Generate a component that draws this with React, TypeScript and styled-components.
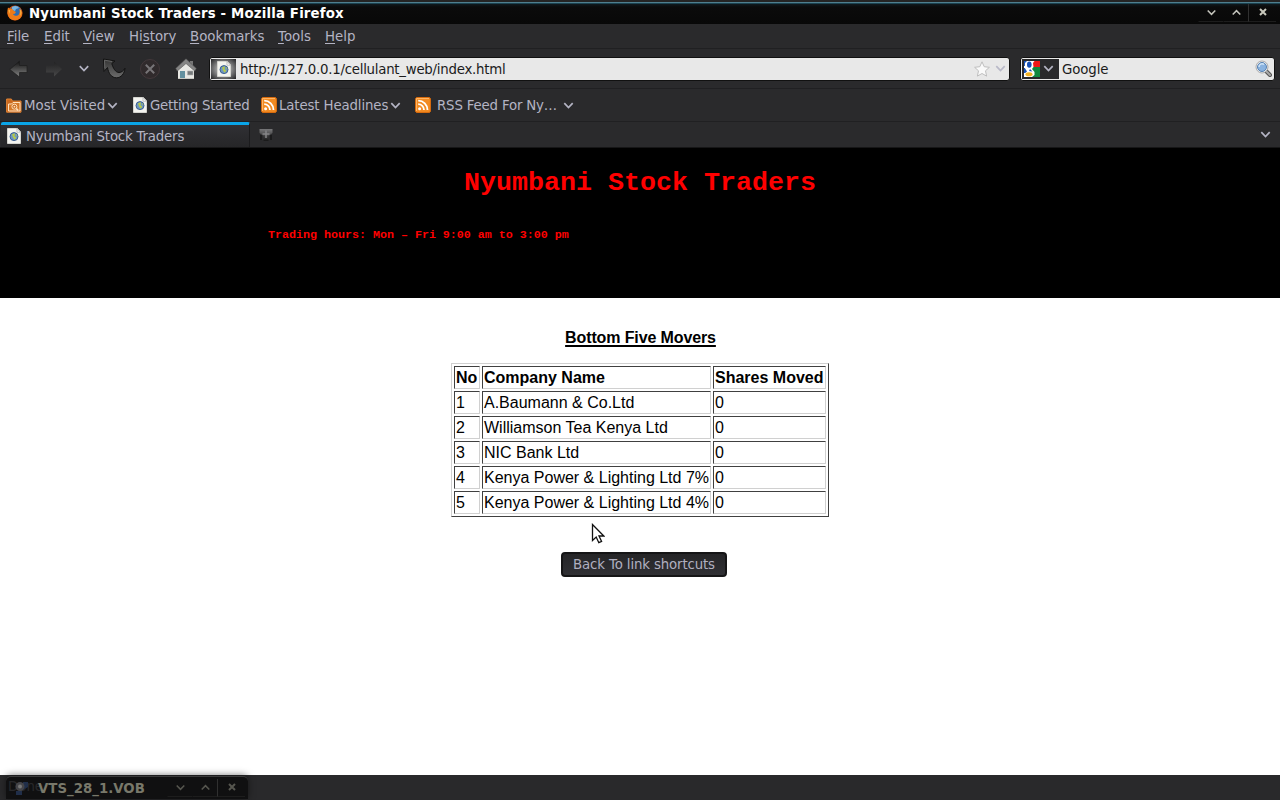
import React from 'react';
import styled, { createGlobalStyle } from 'styled-components';

const GlobalStyle = createGlobalStyle`
  * { box-sizing: border-box; }
  body { margin: 0; background: #fff; overflow: hidden; }
`;

const Window = styled.div`
  width: 1280px;
  height: 800px;
  display: flex;
  flex-direction: column;
  overflow: hidden;
  font: 13.33px/16px 'DejaVu Sans', sans-serif;
  color: #b4b4c4;
  background: #2a2a2c;
  white-space: nowrap;
`;

const Label = styled.span<{ $spacing?: number }>`
  padding-top: 2px;
  letter-spacing: ${(p) => p.$spacing ?? 0}px;
`;

const TitleBar = styled.header`
  height: 24px;
  flex: none;
  display: flex;
  align-items: center;
  padding: 2px 0 0 7px;
  color: #fff;
  font-weight: bold;
  background: linear-gradient(#242424 0 2px, #4f7f8f 2px 3px, #1b424f 3px 4px, #10191d 4px, #0b0b0b 7px, #080808 24px);
`;

const TitleText = styled.span`
  margin-left: 6px;
  padding-top: 1px;
  flex: 1;
  letter-spacing: 0.16px;
`;

const WindowControls = styled.span<{ $right: number }>`
  display: flex;
  margin-right: ${(p) => p.$right}px;
`;

const WindowButton = styled.span<{ $boxed?: boolean; $w?: number }>`
  width: ${(p) => p.$w ?? 25}px;
  height: 18px;
  margin-bottom: 1px;
  display: flex;
  align-items: center;
  justify-content: center;
  border-left: 1px solid ${(p) => (p.$boxed ? '#303030' : 'transparent')};
  border-bottom: 1px solid #1d1d1d;
`;

const Bar = styled.div<{ $h: number }>`
  height: ${(p) => p.$h}px;
  flex: none;
  display: flex;
  align-items: center;
  border-bottom: 1px solid #202022;
`;

const MenuBar = styled(Bar)`
  padding: 1px 0 0 7px;
`;

const MenuItem = styled.span<{ $w: number }>`
  width: ${(p) => p.$w}px;
  u { text-underline-offset: 2px; text-decoration-thickness: 1px; text-decoration-skip-ink: none; }
`;

const NavBar = styled(Bar)`
  padding-left: 9px;
`;

const NavSlot = styled.span<{ $w: number }>`
  width: ${(p) => p.$w}px;
  display: flex;
  justify-content: center;
`;

const Field = styled.div<{ $w: number }>`
  width: ${(p) => p.$w}px;
  height: 24px;
  display: flex;
  align-items: center;
  background: #e8e8e8;
  border: 1px solid #111;
  border-radius: 3px;
  color: #1b1b1b;
`;

const SiteBadge = styled.span`
  width: 25px;
  height: 20px;
  margin: 0 1px;
  display: flex;
  align-items: center;
  justify-content: center;
  background: radial-gradient(#aaa 30%, #2a2a2c 95%);
`;

const EngineBadge = styled.span`
  width: 37px;
  height: 20px;
  margin-left: 1px;
  padding-left: 2px;
  display: flex;
  align-items: center;
  gap: 3px;
  background: #29292b;
`;

const FieldText = styled.span<{ $spacing: number }>`
  flex: 1;
  margin-left: 3px;
  padding-top: 2px;
  letter-spacing: ${(p) => p.$spacing}px;
`;

const FieldActions = styled.span<{ $right: number }>`
  display: flex;
  align-items: center;
  gap: 5px;
  margin-right: ${(p) => p.$right}px;
`;

const BookmarkBar = styled(Bar)`
  padding-left: 6px;
`;

const Bookmark = styled.span<{ $w: number; $gap?: number }>`
  width: ${(p) => p.$w}px;
  display: flex;
  align-items: center;
  gap: ${(p) => p.$gap ?? 2}px;
`;

const TabBar = styled.div`
  height: 26px;
  flex: none;
  display: flex;
  align-items: center;
  border-bottom: 1px solid #161617;
`;

const Tab = styled.div`
  width: 249px;
  height: 25px;
  margin-left: 1px;
  display: flex;
  align-items: center;
  gap: 5px;
  padding: 0 0 0 6px;
  border-top: 3px solid #0aa5e8;
  border-right: 1px solid #1b1b1d;
  border-radius: 2px 2px 0 0;
  background: linear-gradient(#303034, #262628);
`;

const NewTab = styled.span`
  margin-left: 9px;
  flex: 1;
  display: flex;
`;

const TabMenu = styled.span`
  margin-right: 9px;
  display: flex;
`;

const FieldSpacer = styled.span`
  width: 10px;
`;

const Banner = styled.section`
  height: 150px;
  flex: none;
  padding-top: 20px;
  background: #000;
  color: #f00;
  font-family: 'Courier 10 Pitch', 'Liberation Mono', monospace;
  font-weight: bold;
`;

const BannerTitle = styled.h1`
  margin: 0;
  text-align: center;
  font-size: 26.67px;
  line-height: 30px;
`;

const Hours = styled.p`
  margin: 30px 0 0 268px;
  font-size: 11.67px;
  line-height: 14px;
`;

const Page = styled.main`
  height: 477px;
  flex: none;
  position: relative;
  display: flex;
  flex-direction: column;
  align-items: center;
  background: #fff;
  color: #000;
  font: 16px/19px 'Liberation Sans', Arial, sans-serif;
`;

const Caption = styled.h2`
  margin: 30px 0 0 1px;
  height: 35px;
  font-size: 16px;
  letter-spacing: -0.12px;
  text-decoration: underline;
  text-decoration-thickness: 2px;
  text-underline-offset: 2px;
  text-decoration-skip-ink: none;
`;

const Movers = styled.table`
  width: 378px;
  table-layout: fixed;
  border-collapse: separate;
  border-spacing: 2px;
  border: 1px solid;
  border-color: #d0d0d0 #404040 #404040 #d0d0d0;
`;

const Cell = styled.td<{ $head?: boolean; $w: number }>`
  width: ${(p) => p.$w}px;
  height: 23px;
  padding: 1px;
  border: 1px solid;
  border-color: #404040 #d0d0d0 #d0d0d0 #404040;
  font-weight: ${(p) => (p.$head ? 'bold' : 'normal')};
`;

const BackButton = styled.button`
  width: 166px;
  height: 25px;
  margin: 35px 0 0 8px;
  padding: 1px 0 0;
  border: 2px solid #151516;
  border-radius: 4px;
  background: linear-gradient(#252527, #303034);
  color: #b0b0c0;
  font: 13.33px/16px 'DejaVu Sans', sans-serif;
  letter-spacing: -0.14px;
`;

const Pointer = styled.svg`
  position: absolute;
  left: 591px;
  top: 225px;
`;

const StatusBar = styled.footer`
  height: 25px;
  flex: none;
  position: relative;
  padding: 4px 8px;
  background: #29292b;
  color: #b4b4c4;
`;

const TaskWindow = styled.div`
  position: absolute;
  left: 6px;
  top: 1px;
  width: 242px;
  height: 23px;
  display: flex;
  align-items: center;
  padding-left: 8px;
  border-top: 1px solid #3a3a3a;
  border-radius: 5px 5px 0 0;
  background: rgba(12, 12, 12, 0.84);
  box-shadow: 0 -1px 7px rgba(0, 0, 0, 0.5);
  color: #78786a;
  font-weight: bold;
`;

const TaskName = styled.span`
  flex: 1;
  margin-left: 8px;
  padding-top: 2px;
`;

const Chevron = ({ up, color = '#b4b4c4', w = 11 }: { up?: boolean; color?: string; w?: number }) => (
  <svg width={w} height="7" viewBox="0 0 10 7" fill="none" stroke={color} strokeWidth="1.7">
    <path d={up ? 'M.8 5.8 5 1.5l4.2 4.3' : 'M.8 1.2 5 5.5l4.2-4.3'} />
  </svg>
);

const Cross = ({ color }: { color: string }) => (
  <svg width="8" height="8" viewBox="0 0 8 8" stroke={color} strokeWidth="2">
    <path d="m1 1 6 6M7 1 1 7" />
  </svg>
);

const FirefoxIcon = () => (
  <svg width="16" height="16" viewBox="0 0 16 16">
    <circle cx="8" cy="8" r="7.6" fill="#d9580f" />
    <circle cx="8.6" cy="6.4" r="5.6" fill="#2f6cb0" />
    <path d="M5 2c3-2 6-1 7 1l-3 1-1 2-3-1z" fill="#79b6e2" />
    <path d="M1 2.5 3 4l2-.4 1.4 2L9 7 7.8 8.8 6 9c1 2.3 4.5 2.5 6 .2 1.2-2 .7-4-.2-5.5C15 5.5 16 9 14 12c-2.7 4-8.3 4-11.5 1C0 10 0 6 1 2.5z" fill="#ef7a17" />
    <path d="M13.2 4c1.6 2 1.6 5 .1 7 .4-2.8 0-5-.1-7zM1.6 5 3 5.3 2.2 9z" fill="#ffc552" />
  </svg>
);

const PageIcon = () => (
  <svg width="14" height="16" viewBox="0 0 14 16">
    <path d="M.5.5h9.8l3.2 3.2v11.8H.5z" fill="#f4f4f0" stroke="#d5d5d0" />
    <path d="M10 .5v3.7h3.5z" fill="#fff" stroke="#aaa" strokeWidth=".7" />
    <circle cx="7" cy="8.6" r="4" fill="#6e96c3" stroke="#3b5f90" />
    <path d="m5 6.3 3-1-.5 3 1.8 1.2-1.500 2.300L6 9.500zM9 5.700l1.400 1.600-.6 1.200z" fill="#b4c84a" />
  </svg>
);

const RssIcon = () => (
  <svg width="16" height="16" viewBox="0 0 16 16">
    <rect x=".6" y=".6" width="14.8" height="14.8" rx="1.5" fill="#f28b22" stroke="#e16e0c" />
    <path d="M1.5 14V1.5H14" fill="none" stroke="#ffb563" />
    <circle cx="4.6" cy="11.7" r="1.5" fill="#fff" />
    <path d="M3.2 7.2a5.8 5.8 0 0 1 5.8 5.8M3.2 3.7a9.3 9.3 0 0 1 9.3 9.3" fill="none" stroke="#fff" strokeWidth="1.8" />
  </svg>
);

const FolderIcon = () => (
  <svg width="16" height="16" viewBox="0 0 16 16">
    <path d="M.6 15.2V2h4.8l1 2h8.6v11.2z" fill="#c9681d" stroke="#e18335" />
    <path d="M2.5 14V7h3L7 5.5h7V14z" fill="#d67928" stroke="#ffe1bd" />
    <circle cx="8.4" cy="9.7" r="2.5" fill="#c96a20" stroke="#ffe1bd" />
    <circle cx="8.4" cy="9.7" r=".9" fill="#ffe1bd" />
    <path d="m10.3 11.6 1.8 1.8" stroke="#ffe1bd" strokeWidth="1.5" />
  </svg>
);

const Shade = ({ id, from, to }: { id: string; from: string; to: string }) => (
  <defs>
    <linearGradient id={id} x1="0" y1="0" x2="0" y2="1">
      <stop offset="0" stopColor={from} />
      <stop offset="1" stopColor={to} />
    </linearGradient>
  </defs>
);

const BackIcon = () => (
  <svg width="20" height="18" viewBox="0 0 20 18">
    <Shade id="back" from="#101010" to="#858585" />
    <path d="M.8 9.5 10.5 1v4.5H18v7h-7.500V17z" fill="url(#back)" stroke="#1c1c1d" strokeWidth=".7" />
  </svg>
);

const ForwardIcon = () => (
  <svg width="20" height="18" viewBox="0 0 20 18">
    <Shade id="forward" from="#222223" to="#484849" />
    <path d="M18 9 10 1.500v4H2v7h8v4z" fill="url(#forward)" />
  </svg>
);

const ReloadIcon = () => (
  <svg width="24" height="22" viewBox="0 0 24 22">
    <Shade id="reload" from="#333" to="#6c6c6c" />
    <path d="M1.500 1 13 3 9.800 5.500C11 10 13.500 14.500 17 14.500c2.500 0 4.500-1.700 6-4.300-.4 5.500-4 9.600-8.500 9.600C9.500 19.800 6.500 15.500 5.500 9.500L2 13.500z" fill="url(#reload)" stroke="#121212" strokeWidth="1" />
    <path d="M2.800 10.500 2.500 2.200l7.500 1.300" fill="none" stroke="#707070" strokeWidth=".8" />
  </svg>
);

const StopIcon = () => (
  <svg width="22" height="22" viewBox="0 0 22 22">
    <circle cx="11" cy="11" r="9.5" fill="#302a2c" stroke="#43383b" />
    <path d="m6.800 6.800 8.400 8.400M15.200 6.800l-8.400 8.400" stroke="#777477" strokeWidth="2" />
  </svg>
);

const HomeIcon = () => (
  <svg width="22" height="22" viewBox="0 0 22 22">
    <path d="M3 10 11 3l8 7v11H3z" fill="#e8e8e4" />
    <path d="M15 3h3v5l-3-3z" fill="#777" />
    <path d="M11 .8.7 10.500l1.600 2.500L11 5.500l8.700 7.500 1.600-2.500z" fill="#858585" stroke="#555" strokeWidth=".6" />
    <path d="M5 13h5v8H5z" fill="#63909f" />
    <path d="M12.500 13H18v4h-5.500z" fill="#75797b" stroke="#b0b0b0" strokeWidth=".6" />
    <path d="M3 20.500h16" stroke="#c8c8c2" />
  </svg>
);

const GoogleIcon = () => (
  <svg width="16" height="16" viewBox="0 0 16 16">
    <path d="M0 0h16v16H0z" fill="#fff" />
    <path d="M8 0h8v6H8z" fill="#ef1717" />
    <path d="M8 6h8v10H8z" fill="#11883f" />
    <path d="M0 0h4v5H0zM0 7h5v5H0z" fill="#1651b8" />
    <path d="M3 0h7.500L9 2l.5 4L8 8l2.500 3v3L8 16H1l-1-3 3-2.500L.8 7 1 2z" fill="#fff" />
    <ellipse cx="5.300" cy="3.600" rx="2.300" ry="3.200" fill="#1651b8" />
    <ellipse cx="5" cy="13.200" rx="3.500" ry="2" fill="#f2b222" />
    <path d="m6 8 2.500 2.500L5 10z" fill="#1651b8" />
  </svg>
);

const StarIcon = () => (
  <svg width="16" height="16" viewBox="0 0 16 16">
    <path d="m8 .8 2.200 4.900 5.200.6-3.900 3.500 1.100 5.300L8 12.500l-4.600 2.600 1.100-5.300L.6 6.300l5.200-.6z" fill="#fafafa" stroke="#bebebe" />
  </svg>
);

const SearchIcon = () => (
  <svg width="17" height="17" viewBox="0 0 17 17">
    <path d="m11 11 4 4" stroke="#555" strokeWidth="4" strokeLinecap="round" />
    <path d="m11 11 4 4" stroke="#aaa" strokeWidth="2" strokeLinecap="round" />
    <circle cx="7" cy="7" r="6" fill="#f4f4f4" stroke="#999" strokeWidth=".8" />
    <circle cx="7" cy="7" r="4.500" fill="#8ab3e0" stroke="#557fb1" />
    <path d="M4 7c0-3 3-4 5-2.500" fill="none" stroke="#d0e4f6" strokeWidth="1.500" />
  </svg>
);

const PlusIcon = () => (
  <svg width="14" height="14" viewBox="0 0 14 14">
    <Shade id="plus" from="#777779" to="#171717" />
    <path d="M.5 1h13v4L9.500 8v5h-5V8l-4-3z" fill="url(#plus)" />
    <path d="M7 2.500V10M3.500 6h7" stroke="#858587" strokeWidth="1.500" />
    <path d="M1 7h2v5H1zM11 7h2v5h-2z" fill="#1b1b1c" />
  </svg>
);

const MediaIcon = () => (
  <svg width="16" height="15" viewBox="0 0 16 15">
    <path d="M9 1h5v5L9 9zM2 10h6v4H2z" fill="#202e49" />
    <circle cx="6" cy="5.500" r="4.500" fill="#454549" />
    <circle cx="6" cy="5.500" r="2" fill="#777" />
  </svg>
);

const menus: [string, string, string, number][] = [
  ['', 'F', 'ile', 37], ['', 'E', 'dit', 39], ['', 'V', 'iew', 46], ['Hi', 's', 'tory', 61],
  ['', 'B', 'ookmarks', 88], ['', 'T', 'ools', 47], ['', 'H', 'elp', 40],
];

const widths = [26, 229, 113];
const rows = [
  ['No', 'Company Name', 'Shares Moved'],
  ['1', 'A.Baumann & Co.Ltd', '0'],
  ['2', 'Williamson Tea Kenya Ltd', '0'],
  ['3', 'NIC Bank Ltd', '0'],
  ['4', 'Kenya Power & Lighting Ltd 7%', '0'],
  ['5', 'Kenya Power & Lighting Ltd 4%', '0'],
];

export default function App() {
  return (
    <Window>
      <GlobalStyle />
      <TitleBar>
        <FirefoxIcon />
        <TitleText>Nyumbani Stock Traders - Mozilla Firefox</TitleText>
        <WindowControls $right={4}>
          <WindowButton><Chevron color="#c4c4bc" w={9} /></WindowButton>
          <WindowButton><Chevron up color="#c4c4bc" w={9} /></WindowButton>
          <WindowButton $boxed $w={28}><Cross color="#c8c8bc" /></WindowButton>
        </WindowControls>
      </TitleBar>
      <MenuBar $h={25}>
        {menus.map(([pre, key, post, w]) => (
          <MenuItem key={key + post} $w={w}>{pre}<u>{key}</u>{post}</MenuItem>
        ))}
      </MenuBar>
      <NavBar $h={40}>
        <NavSlot $w={20}><BackIcon /></NavSlot>
        <NavSlot $w={50}><ForwardIcon /></NavSlot>
        <NavSlot $w={10}><Chevron /></NavSlot>
        <NavSlot $w={49}><ReloadIcon /></NavSlot>
        <NavSlot $w={24}><StopIcon /></NavSlot>
        <NavSlot $w={47}><HomeIcon /></NavSlot>
        <Field $w={801}>
          <SiteBadge><PageIcon /></SiteBadge>
          <FieldText $spacing={-0.25}>http://127.0.0.1/cellulant_web/index.html</FieldText>
          <FieldActions $right={3}><StarIcon /><Chevron color="#b9b9c8" /></FieldActions>
        </Field>
        <FieldSpacer />
        <Field $w={255}>
          <EngineBadge><GoogleIcon /><Chevron /></EngineBadge>
          <FieldText $spacing={-0.1}>Google</FieldText>
          <FieldActions $right={2}><SearchIcon /></FieldActions>
        </Field>
      </NavBar>
      <BookmarkBar $h={33}>
        <Bookmark $w={127}><FolderIcon /><Label>Most Visited</Label><Chevron /></Bookmark>
        <Bookmark $w={128} $gap={3}><PageIcon /><Label $spacing={-0.24}>Getting Started</Label></Bookmark>
        <Bookmark $w={154}><RssIcon /><Label $spacing={-0.13}>Latest Headlines</Label><Chevron /></Bookmark>
        <Bookmark $w={160} $gap={6}><RssIcon /><Label $spacing={-0.17}>RSS Feed For Ny…</Label><Chevron /></Bookmark>
      </BookmarkBar>
      <TabBar>
        <Tab><PageIcon /><Label $spacing={-0.19}>Nyumbani Stock Traders</Label></Tab>
        <NewTab><PlusIcon /></NewTab>
        <TabMenu><Chevron /></TabMenu>
      </TabBar>
      <Banner>
        <BannerTitle>Nyumbani Stock Traders</BannerTitle>
        <Hours>Trading hours: Mon – Fri 9:00 am to 3:00 pm</Hours>
      </Banner>
      <Page>
        <Caption>Bottom Five Movers</Caption>
        <Movers>
          <tbody>
            {rows.map((row, r) => (
              <tr key={row[0]}>
                {row.map((text, c) => <Cell key={c} $w={widths[c]} $head={r === 0}>{text}</Cell>)}
              </tr>
            ))}
          </tbody>
        </Movers>
        <BackButton>Back To link shortcuts</BackButton>
        <Pointer width="14" height="22" viewBox="0 0 14 22">
          <path d="M1.500 1.500v16l3.700-3.400 2.600 5.600 2.800-1.300L8 13h4.800z" fill="#fff" stroke="#111" strokeWidth="1.300" />
        </Pointer>
      </Page>
      <StatusBar>
        Done
        <TaskWindow>
          <MediaIcon />
          <TaskName>VTS_28_1.VOB</TaskName>
          <WindowControls $right={3}>
            <WindowButton><Chevron color="#56564f" w={9} /></WindowButton>
            <WindowButton><Chevron up color="#56564f" w={9} /></WindowButton>
            <WindowButton $boxed $w={28}><Cross color="#56564f" /></WindowButton>
          </WindowControls>
        </TaskWindow>
      </StatusBar>
    </Window>
  );
}
